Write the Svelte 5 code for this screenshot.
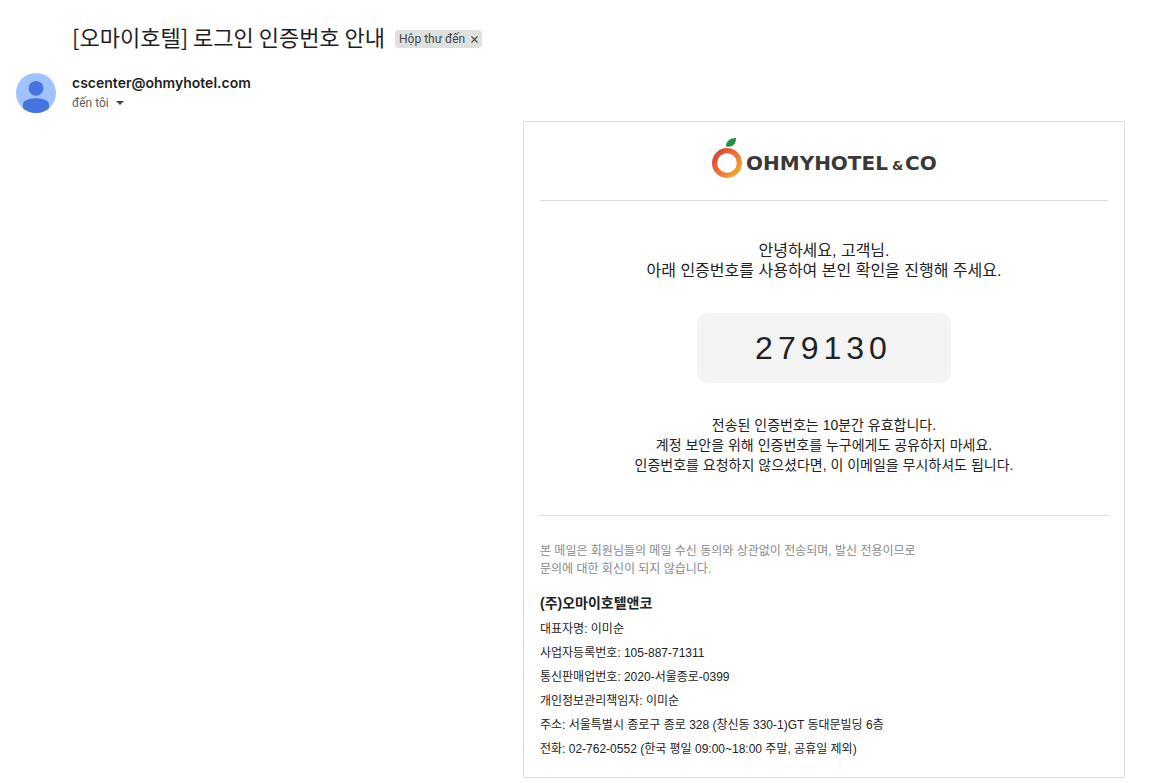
<script>
  const details = [
    ['대표자명', '이미순'],
    ['사업자등록번호', '105-887-71311'],
    ['통신판매업번호', '2020-서울종로-0399'],
    ['개인정보관리책임자', '이미순'],
    ['주소', '서울특별시 종로구 종로 328 (창신동 330-1)GT 동대문빌딩 6층'],
    ['전화', '02-762-0552 (한국 평일 09:00~18:00 주말, 공휴일 제외)'],
  ];
</script>

<main>
  <header class="subject">
    <h1>[오마이호텔] 로그인 인증번호 안내</h1>
    <span class="label">
      Hộp thư đến
      <button class="remove" aria-label="Xóa nhãn Hộp thư đến">
        <svg width="7" height="7" viewBox="0 0 7 7"><path d="M.5 .5l6 6M6.5 .5l-6 6" stroke="#444746" stroke-width="1.1" /></svg>
      </button>
    </span>
  </header>

  <section class="sender">
    <svg class="avatar" width="40" height="40" viewBox="0 0 40 40" aria-hidden="true">
      <defs><clipPath id="face"><circle cx="20" cy="20" r="20" /></clipPath></defs>
      <g clip-path="url(#face)">
        <rect width="40" height="40" fill="#a0c3ff" />
        <circle cx="20" cy="15.3" r="7.4" fill="#4374e0" />
        <path d="M7 40v-8.500C7 27.500 13 25.300 20 25.300S33 27.500 33 31.500V40z" fill="#4374e0" />
      </g>
    </svg>
    <div>
      <div class="from">cscenter@ohmyhotel.com</div>
      <button class="to">đến tôi <svg width="8" height="4" viewBox="0 0 8 4"><path d="M0 0h8L4 4z" fill="#444746" /></svg></button>
    </div>
  </section>

  <article class="card">
    <div class="brand">
      <svg width="226" height="42" viewBox="0 0 226 42" role="img" aria-label="OHMYHOTEL &amp; CO">
        <defs>
          <linearGradient id="ring" x1="0.2" y1="0" x2="1" y2="0.7">
            <stop offset="0" stop-color="#d94a38" />
            <stop offset="0.35" stop-color="#e8673a" />
            <stop offset="0.65" stop-color="#ec7a38" />
            <stop offset="1" stop-color="#f3a02c" />
          </linearGradient>
        </defs>
        <circle cx="16" cy="26" r="12.4" fill="none" stroke="url(#ring)" stroke-width="5.2" />
        <path d="M15 9.500C15 4 19 1 25 1C25 7 22 10.500 15 9.500z" fill="#1f9150" />
        <text x="35" y="33" class="word">OHMYHOTEL</text>
        <text x="181" y="33" class="amp">&amp;</text>
        <text x="194" y="33" class="word">CO</text>
      </svg>
    </div>

    <div class="body">
      <p class="greeting">안녕하세요, 고객님.<br />아래 인증번호를 사용하여 본인 확인을 진행해 주세요.</p>
      <div class="code">279130</div>
      <p class="notice">
        전송된 인증번호는 10분간 유효합니다.<br />
        계정 보안을 위해 인증번호를 누구에게도 공유하지 마세요.<br />
        인증번호를 요청하지 않으셨다면, 이 이메일을 무시하셔도 됩니다.
      </p>
    </div>

    <footer>
      <p class="fine">본 메일은 회원님들의 메일 수신 동의와 상관없이 전송되며, 발신 전용이므로<br />문의에 대한 회신이 되지 않습니다.</p>
      <h2>(주)오마이호텔앤코</h2>
      <ul>
        {#each details as [name, value]}
          <li>{name}: {value}</li>
        {/each}
      </ul>
    </footer>
  </article>
</main>

<style>
  :global(body) { margin: 0; background: #fff; }
  main { padding: 22px 25px 5px 16px; color: #222; font-family: "Liberation Sans", "Noto Sans CJK KR", sans-serif; }
  h1, h2, p, ul { margin: 0; padding: 0; font-weight: 400; }
  button { border: 0; padding: 0; background: none; color: inherit; font: inherit; cursor: pointer; }
  .subject { display: flex; align-items: center; gap: 10px; padding-left: 56px; }
  h1 { font-family: "Noto Sans CJK KR", sans-serif; font-size: 22px; line-height: 28px; color: #1f1f1f; }
  .label { display: flex; align-items: center; gap: 6px; height: 18px; margin-top: 6px; padding: 0 4px; border-radius: 4px; background: #dfe1df; color: #444746; font-family: Roboto, sans-serif; font-size: 12px; }
  .remove { display: flex; }
  .sender { display: flex; gap: 16px; margin-top: 23px; height: 48px; }
  .from { font-family: Inter, sans-serif; font-size: 14px; font-weight: 600; line-height: 20px; color: #1f1f1f; }
  .to { display: flex; align-items: center; gap: 7px; font-family: Roboto, sans-serif; font-size: 12px; line-height: 20px; color: #5e5e5e; }
  .card { box-sizing: border-box; width: 100%; max-width: 602px; margin-left: auto; padding: 0 16px 16px; border: 1px solid #ddd; }
  .brand { display: flex; justify-content: center; padding: 15px 0 21px; border-bottom: 1px solid #ddd; }
  .word { font: 700 20px "DejaVu Sans", sans-serif; fill: #3a3938; }
  .amp { font: 700 13px "DejaVu Sans", sans-serif; fill: #3a3938; }
  .body { display: flex; flex-direction: column; align-items: center; padding: 40px 0; border-bottom: 1px solid #ddd; text-align: center; }
  .greeting { font-size: 16px; line-height: 20px; }
  .code { margin: 32px 0; padding: 0 59px 0 58px; border-radius: 10px; background: #f4f4f4; font-size: 32px; line-height: 70px; letter-spacing: 5px; }
  .notice { font-size: 14px; line-height: 20px; }
  .fine { padding-top: 26px; font-size: 12px; line-height: 18px; color: #888; }
  h2 { margin: 15px 0 4px; font-size: 14px; font-weight: 700; line-height: 20px; }
  ul { list-style: none; }
  li { font-size: 12px; line-height: 24px; }
</style>
